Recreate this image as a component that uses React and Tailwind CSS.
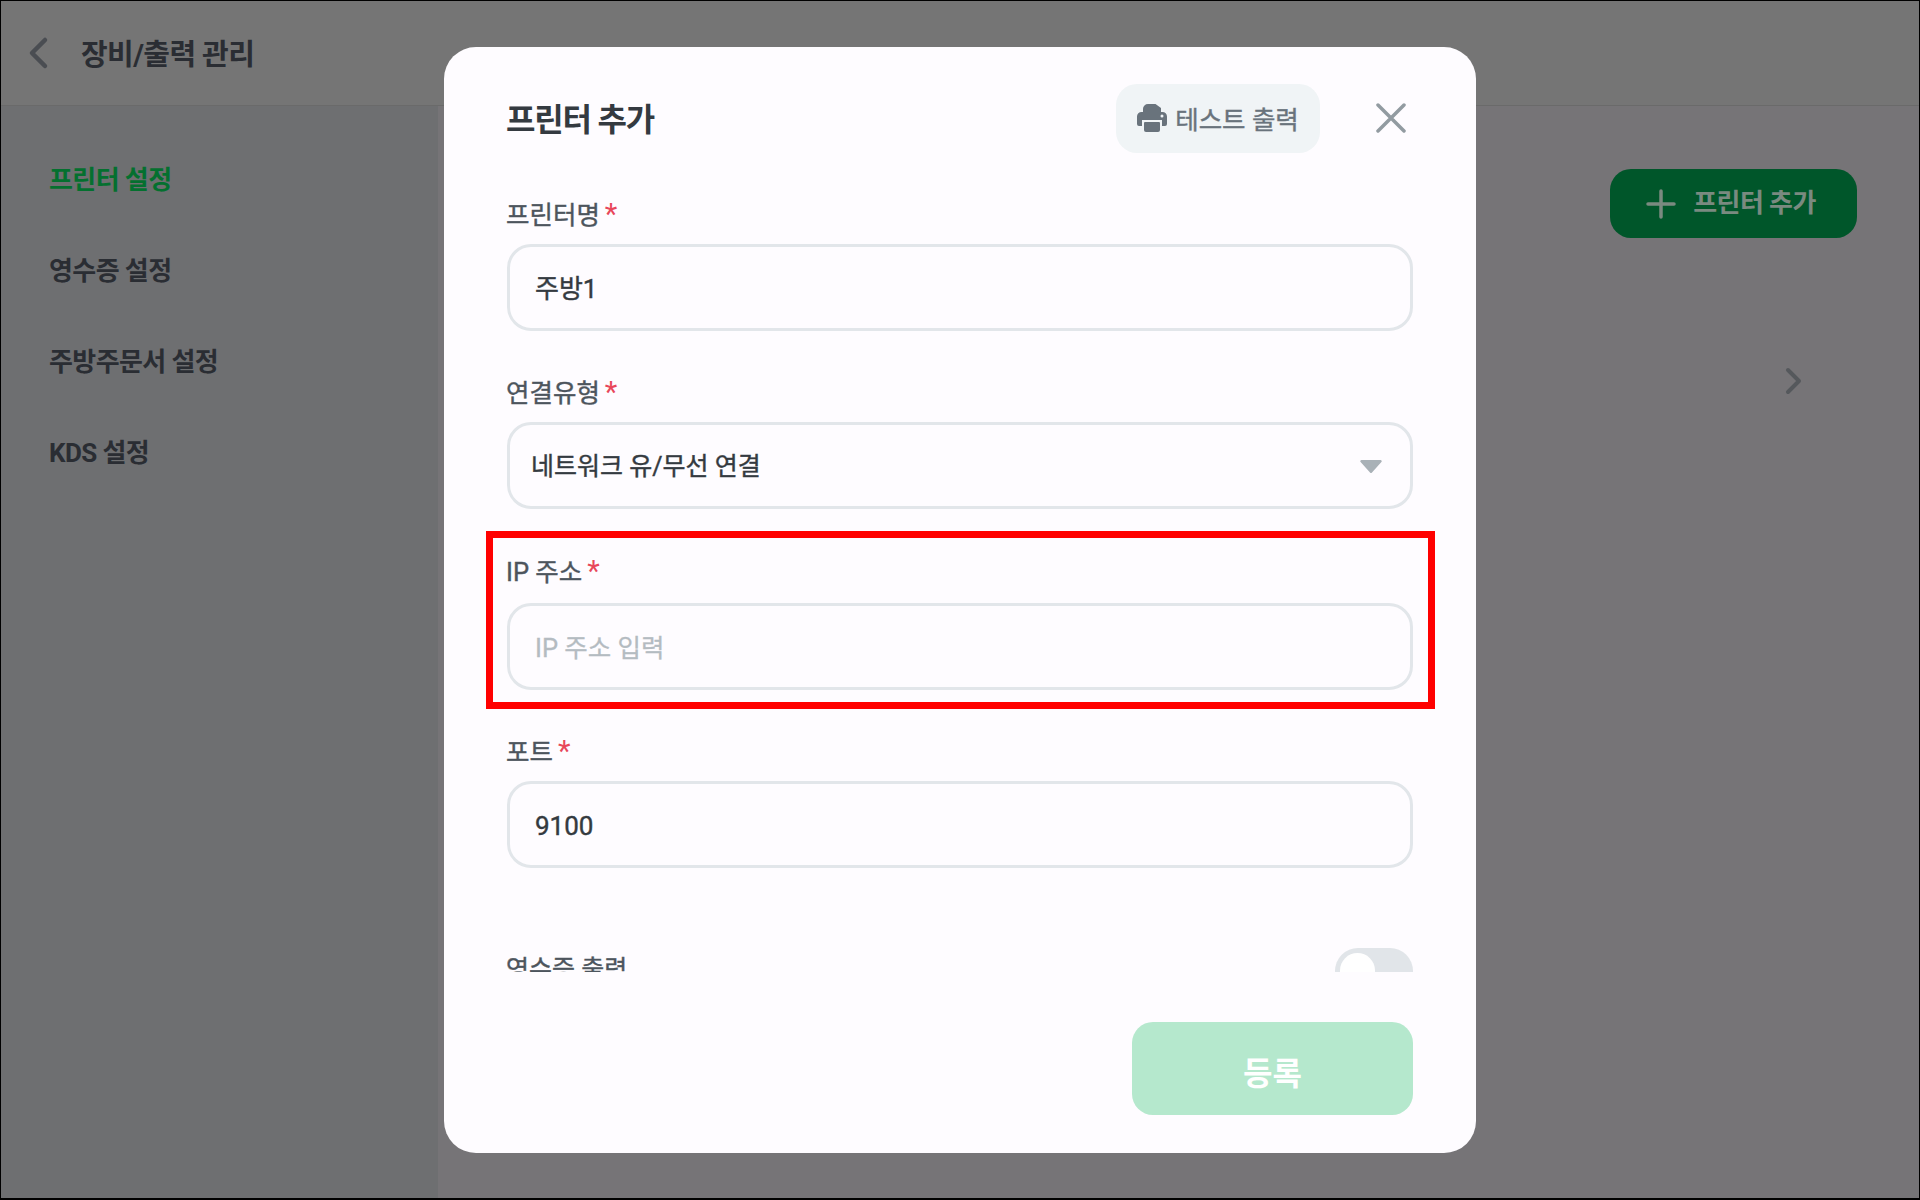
import React from 'react';

const FONT = 'font-["Roboto","Noto_Sans_CJK_KR",sans-serif]';

const menuItems = ['프린터 설정', '영수증 설정', '주방주문서 설정', 'KDS 설정'];

const PrinterIcon = () => (
    <svg width="30" height="28" viewBox="0 0 30 28" className="shrink-0">
        <path
            fill="#69737c"
            d="M6 8V5a5 5 0 0 1 5-5h7.500L24 4v4h1.500A4.500 4.500 0 0 1 30 12.500V20a2 2 0 0 1-2 2h-3v-6H5v6H2a2 2 0 0 1-2-2v-7.500A4.500 4.500 0 0 1 4.500 8z"
        />
        <path fill="#69737c" d="M8 18h14a1 1 0 0 1 1 1v7a2 2 0 0 1-2 2H9a2 2 0 0 1-2-2v-7a1 1 0 0 1 1-1z" />
        <circle cx="25" cy="12" r="1.500" fill="#f0f4f6" />
    </svg>
);

const Label = ({ children }) => (
    <label className="-ml-[1px] flex h-[34px] items-center gap-[5px] text-[25.5px] leading-[34px] text-[#4d555d] [-webkit-text-stroke:0.4px]">
        {children}
        <span className="mb-[1px] text-[29px] text-[#e8475a] [-webkit-text-stroke:0px]">*</span>
    </label>
);

const Field = ({ label, value, placeholder, gap = 'gap-[12px]' }) => (
    <div className={`flex flex-col ${gap}`}>
        <Label>{label}</Label>
        <div className="flex h-[87px] items-center rounded-[24px] border-[3px] border-[#e2e6ea] px-[25px] pt-[4px]">
            {value ? (
                <span className="text-[26px] text-[#343a40] [-webkit-text-stroke:0.4px]">{value}</span>
            ) : (
                <span className="text-[25.5px] text-[#b4bbc1] [-webkit-text-stroke:0.3px]">{placeholder}</span>
            )}
        </div>
    </div>
);

export default function App() {
    return (
        <div className={`relative flex h-screen flex-col overflow-hidden border border-b-2 border-black bg-[#767477] ${FONT}`}>
            <header className="flex h-[105px] shrink-0 items-center border-b border-[#6a6a6a] bg-[#757575] pl-[25px]">
                <svg width="24" height="34" viewBox="0 0 24 34" fill="none" stroke="#4a4d52" strokeWidth="4.500" strokeLinecap="round" strokeLinejoin="round">
                    <path d="M19 4 6 17l13 13" />
                </svg>
                <h1 className="ml-[31px] pt-[5px] text-[29px] font-bold tracking-[-0.6px] text-[#2a2d33]">장비/출력 관리</h1>
            </header>

            <div className="flex flex-1">
                <nav className="flex w-[437px] shrink-0 flex-col gap-[46px] bg-[#6e6f71] pl-[48px] pt-[52px]">
                    {menuItems.map((item, i) => (
                        <a
                            key={item}
                            className={`h-[45px] text-[26px] font-bold leading-[45px] tracking-[-0.6px] ${i === 0 ? 'text-[#04702f]' : 'text-[#2a2d33]'}`}
                        >
                            {item}
                        </a>
                    ))}
                </nav>

                <main className="flex flex-1 flex-col items-end pr-[62px] pt-[63px]">
                    <button className="flex h-[69px] w-[247px] items-center justify-center gap-[17px] rounded-[21px] bg-[#00562a] pr-[5px] text-[26px] font-bold tracking-[-0.6px] text-[#7a8a80]">
                        <svg width="30" height="30" viewBox="0 0 30 30" fill="none" stroke="#7a8a80" strokeWidth="3.500" strokeLinecap="round">
                            <path d="M15 2v26M2 15h26" />
                        </svg>
                        프린터 추가
                    </button>
                    <svg width="20" height="28" viewBox="0 0 20 28" fill="none" stroke="#55585c" strokeWidth="4" strokeLinecap="round" strokeLinejoin="round" className="mr-[53px] mt-[129px]">
                        <path d="M4 3l11 11L4 25" />
                    </svg>
                </main>
            </div>

            <div className="absolute inset-0 flex items-center justify-center">
                <div className="flex h-[1106px] w-[1032px] flex-col rounded-[32px] bg-[#fefcff] pl-[63px] pr-[63px] pt-[37px]">
                    <div className="flex h-[69px] shrink-0 items-center">
                        <h2 className="-ml-[1px] flex-1 pt-[4px] text-[32px] font-bold tracking-[-1.2px] text-[#343a40]">프린터 추가</h2>
                        <button className="flex h-[69px] w-[204px] items-center justify-center gap-[8px] rounded-[21px] bg-[#f0f4f6] text-[25.5px] text-[#69737c] [-webkit-text-stroke:0.4px]">
                            <PrinterIcon />
                            <span className="pt-[4px]">테스트 출력</span>
                        </button>
                        <button className="ml-[56px] mr-[7px]" aria-label="close">
                            <svg width="30" height="30" viewBox="0 0 30 30" fill="none" stroke="#929ba1" strokeWidth="3.500" strokeLinecap="round" className="block">
                                <path d="M2 2l26 26M28 2 2 28" />
                            </svg>
                        </button>
                    </div>

                    {/* scroll area, side padding keeps the red frame inside the clip */}
                    <div className="-mx-[23px] flex min-h-0 flex-1 flex-col gap-[46px] overflow-hidden px-[23px] pt-[45px]">
                        <Field label="프린터명" value="주방1" />

                        <div className="-mt-[1px] flex flex-col gap-[12px]">
                            <Label>연결유형</Label>
                            <div className="flex h-[87px] items-center justify-between rounded-[24px] border-[3px] border-[#e2e6ea] pl-[21px] pr-[28px] text-[25px] text-[#343a40]">
                                <span className="pt-[3px] [-webkit-text-stroke:0.4px]">네트워크 유/무선 연결</span>
                                <svg width="22" height="13" viewBox="0 0 22 13" className="mt-[2px]">
                                    <path fill="#a9b1b7" d="M1.500 0h19a1.200 1.200 0 0 1 .9 2L12 12.400a1.400 1.400 0 0 1-2 0L.6 2a1.200 1.200 0 0 1 .9-2z" />
                                </svg>
                            </div>
                        </div>

                        <div className="relative">
                            <Field label="IP 주소" placeholder="IP 주소 입력" gap="gap-[14px]" />
                            <div className="pointer-events-none absolute -bottom-[19px] -left-[21px] -right-[22px] -top-[24px] border-[7px] border-[#ff0000]" />
                        </div>

                        <div className="-mt-[1px]">
                            <Field label="포트" value="9100" />
                        </div>

                        <div className="mt-[34px] flex shrink-0 items-start justify-between">
                            <span className="-ml-[1px] pt-[5px] text-[25px] leading-[34px] text-[#4d555d] [-webkit-text-stroke:0.4px]">영수증 출력</span>
                            <div className="flex h-[46px] w-[78px] items-center rounded-full bg-[#e1e5e9] px-[5px]">
                                <div className="size-[35px] rounded-full bg-white" />
                            </div>
                        </div>
                    </div>

                    <div className="flex h-[181px] shrink-0 items-start justify-end pt-[50px]">
                        <button className="h-[93px] w-[281px] rounded-[21px] bg-[#b5e8cd] pt-[11px] text-[32px] font-bold text-white">등록</button>
                    </div>
                </div>
            </div>
        </div>
    );
}
